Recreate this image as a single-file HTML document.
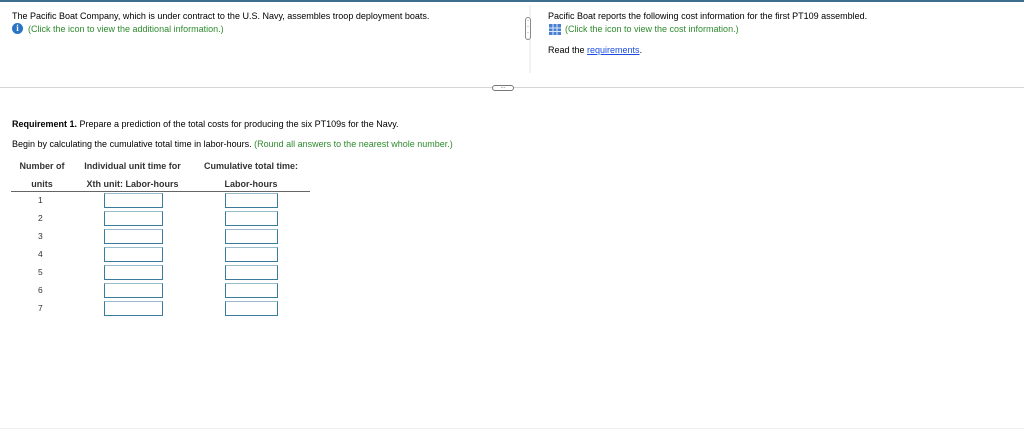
<!DOCTYPE html>
<html><head><meta charset="utf-8"><style>
body{margin:0;width:1024px;height:430px;background:#fff;font-family:"Liberation Sans",Arial,sans-serif;font-size:9px;color:#000;position:relative;overflow:hidden}
.a{position:absolute;white-space:nowrap}
.g{color:#2e8b2e}
.b{font-weight:bold;color:#333}
.in{position:absolute;width:57px;height:13px;border:1px solid #3a7a9a;border-top-color:#9bc;background:#fff}
</style></head><body>
<div class="a" style="left:0;top:0;width:1024px;height:2px;background:#3d6e8e"></div>
<div class="a" style="left:12px;top:11px">The Pacific Boat Company, which is under contract to the U.S. Navy, assembles troop deployment boats.</div>
<div class="a" style="left:12px;top:23px;width:11px;height:11px;border-radius:50%;background:#2a74c6;color:#fff;font-weight:bold;font-size:9px;text-align:center;line-height:11px;font-family:'Liberation Serif',serif">i</div>
<div class="a g" style="left:28px;top:24px">(Click the icon to view the additional information.)</div>
<div class="a" style="left:529px;top:5px;width:2px;height:68px;background:#f2f2f2"></div>
<div class="a" style="left:525px;top:17px;width:4px;height:21px;border:1px solid #888;border-radius:3px;background:#fff;font-size:6px;line-height:6px;text-align:center">·<br>·<br>·</div>
<div class="a" style="left:548px;top:11px">Pacific Boat reports the following cost information for the first PT109 assembled.</div>
<svg class="a" style="left:549px;top:24px" width="12" height="11"><rect x="0" y="0" width="12" height="11" fill="#4a7fd0"/><path d="M4 0V11M8 0V11M0 4H12M0 7.5H12" stroke="#dce8fb" stroke-width="1"/></svg>
<div class="a g" style="left:565px;top:24px">(Click the icon to view the cost information.)</div>
<div class="a" style="left:548px;top:45px">Read the <span style="color:#1a4de0;text-decoration:underline">requirements</span>.</div>
<div class="a" style="left:0;top:87px;width:1024px;height:1px;background:#d6d6d6"></div>
<div class="a" style="left:492px;top:85px;width:20px;height:4px;border:1px solid #777;border-radius:3px;background:#fff;font-size:5px;line-height:4px;text-align:center">···</div>
<div class="a" style="left:12px;top:119px"><b>Requirement 1.</b> Prepare a prediction of the total costs for producing the six PT109s for the Navy.</div>
<div class="a" style="left:12px;top:139px">Begin by calculating the cumulative total time in labor-hours. <span class="g">(Round all answers to the nearest whole number.)</span></div>
<div class="a b" style="left:11px;width:62px;text-align:center;top:161px">Number of</div>
<div class="a b" style="left:11px;width:62px;text-align:center;top:179px">units</div>
<div class="a b" style="left:80px;width:105px;text-align:center;top:161px">Individual unit time for</div>
<div class="a b" style="left:80px;width:105px;text-align:center;top:179px">Xth unit: Labor-hours</div>
<div class="a b" style="left:195px;width:112px;text-align:center;top:161px">Cumulative total time:</div>
<div class="a b" style="left:195px;width:112px;text-align:center;top:179px">Labor-hours</div>
<div class="a" style="left:11px;top:191px;width:299px;height:1px;background:#666"></div>
<div class="a" style="left:38px;top:191px;line-height:18px;color:#333;font-size:8.5px">1<br>2<br>3<br>4<br>5<br>6<br>7</div>
<div class="in" style="left:104px;top:193px"></div><div class="in" style="left:225px;top:193px;width:51px"></div>
<div class="in" style="left:104px;top:211px"></div><div class="in" style="left:225px;top:211px;width:51px"></div>
<div class="in" style="left:104px;top:229px"></div><div class="in" style="left:225px;top:229px;width:51px"></div>
<div class="in" style="left:104px;top:247px"></div><div class="in" style="left:225px;top:247px;width:51px"></div>
<div class="in" style="left:104px;top:265px"></div><div class="in" style="left:225px;top:265px;width:51px"></div>
<div class="in" style="left:104px;top:283px"></div><div class="in" style="left:225px;top:283px;width:51px"></div>
<div class="in" style="left:104px;top:301px"></div><div class="in" style="left:225px;top:301px;width:51px"></div>
<div class="a" style="left:0;top:428px;width:1024px;height:1px;background:#eee"></div>
</body></html>
